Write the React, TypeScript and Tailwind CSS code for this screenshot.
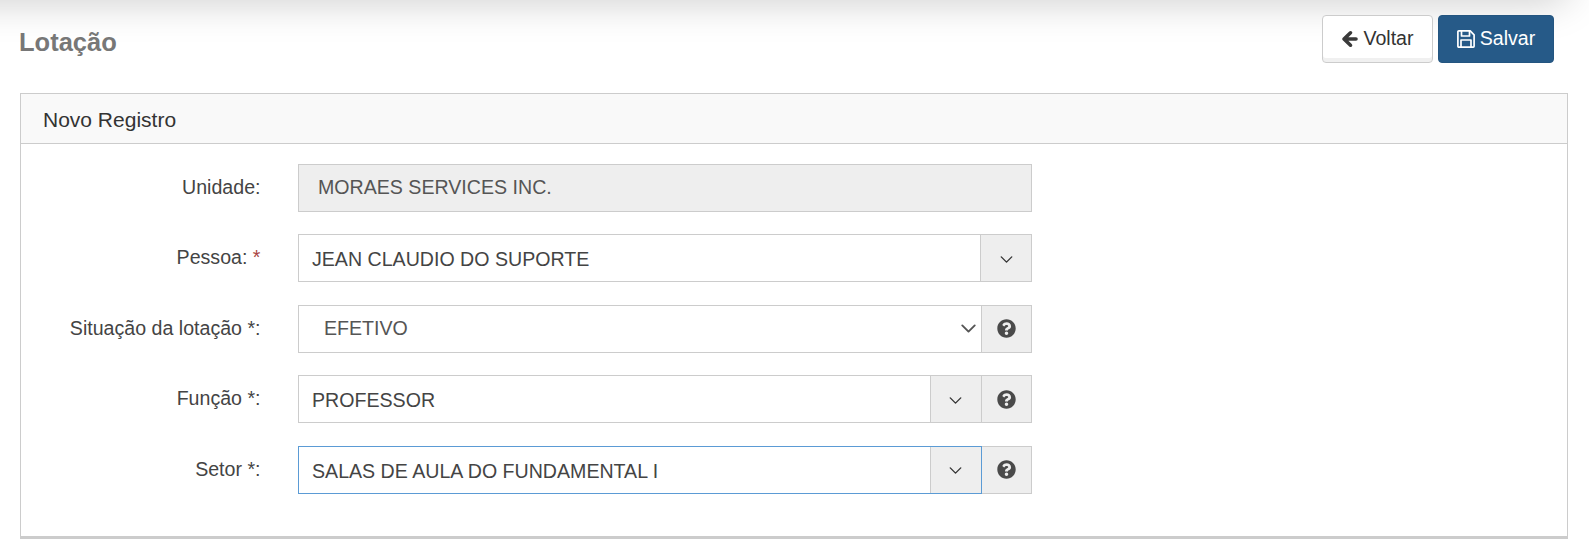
import { FaQuestionCircle } from "react-icons/fa";
import { ChevronDown } from "lucide-react";

const Help = () => (
  <div className="w-[50.5px] shrink-0 h-full bg-[#eeeeee] border border-[#cccccc] border-l-0 flex items-center justify-center">
    <FaQuestionCircle className="text-[#4a4a4a] text-[19px]" />
  </div>
);

const Caret = () => (
  <div className="w-[51px] shrink-0 h-full bg-[#eeeeee] border-l border-[#cccccc] pt-[2px] flex items-center justify-center">
    <ChevronDown size={21} strokeWidth={1.6} className="text-[#333333]" />
  </div>
);

const Row = ({ label, children }: { label: React.ReactNode; children: React.ReactNode }) => (
  <div className="flex h-[48px] items-start">
    <div className="w-[239.5px] text-right leading-[46px] text-[#444444] shrink-0">{label}</div>
    <div className="w-[734px] ml-[37.5px] h-full flex">{children}</div>
  </div>
);

export default function App() {
  return (
    <div className="relative bg-white h-[556px] overflow-hidden font-['Liberation_Sans',Arial,sans-serif] text-[19.6px] text-[#333333]">
      <div className="absolute left-[-60px] top-[-40px] w-[1630px] h-[40px] rounded-[30px] shadow-[0_0_42px_rgba(0,0,0,0.22)]" />
      <div className="relative flex justify-between pl-[19px] pr-[35px] pt-[15px] h-[93px]">
        <h1 className="text-[25.5px] font-bold text-[#777777] leading-[54px]">Lotação</h1>
        <div className="flex gap-[5px] h-[48px]">
          <button className="w-[111px] h-full rounded-[4px] border border-[#cccccc] bg-white shadow-[inset_0_-4px_0_#f0f0f0] flex items-center justify-center gap-[5px] text-[#333333]">
            <svg width="17" height="18" viewBox="0 0 17 18" fill="none" stroke="#3a3a3a" strokeWidth="3.6" strokeLinecap="round" strokeLinejoin="round">
              <path d="M15 9H4M9.5 2.8L3 9l6.5 6.2" />
            </svg>
            Voltar
          </button>
          <button className="w-[116px] h-full rounded-[4px] border border-[#245580] bg-[#265a88] flex items-center justify-center gap-[5px] text-white">
            <svg width="18" height="18" viewBox="0 0 18 18" fill="none" stroke="white" strokeWidth="1.7" strokeLinejoin="round">
              <path d="M1.8.9h11.4l3.9 3.9v11.4a.9.9 0 0 1-.9.9H1.8a.9.9 0 0 1-.9-.9V1.8a.9.9 0 0 1 .9-.9z" />
              <path d="M4.5 1v5h8V1" />
              <path d="M4 17v-7h10v7" />
            </svg>
            Salvar
          </button>
        </div>
      </div>
      <div className="relative ml-[20px] w-[1548px] h-[446px] border border-[#cccccc] border-b-[3px] bg-white">
        <div className="h-[50px] bg-[#f9f9f9] border-b border-[#cccccc] pl-[22px] pt-[3px] flex items-center text-[21px]">Novo Registro</div>
        <div className="pt-[19.9px] flex flex-col gap-[22.5px]">
          <Row label="Unidade:">
            <div className="w-full h-full bg-[#eeeeee] border border-[#cccccc] pl-[19px] pb-[1px] flex items-center text-[#555555]">MORAES SERVICES INC.</div>
          </Row>
          <Row label={<>Pessoa: <span className="text-[#a94442]">*</span></>}>
            <div className="w-full h-full border border-[#cccccc] flex">
              <div className="flex-1 pl-[13px] pt-[3px] flex items-center text-[#444444]">JEAN CLAUDIO DO SUPORTE</div>
              <Caret />
            </div>
          </Row>
          <Row label="Situação da lotação *:">
            <div className="flex-1 border border-[#cccccc] flex items-center pl-[25px] justify-between text-[#555555]">
              EFETIVO
              <ChevronDown size={25} strokeWidth={1.8} className="text-[#555555]" />
            </div>
            <Help />
          </Row>
          <Row label="Função *:">
            <div className="flex-1 border border-[#cccccc] flex">
              <div className="flex-1 pl-[13px] pt-[3px] flex items-center text-[#444444]">PROFESSOR</div>
              <Caret />
            </div>
            <Help />
          </Row>
          <Row label="Setor *:">
            <div className="flex-1 border border-[#5b9bd5] flex">
              <div className="flex-1 pl-[13px] pt-[3px] flex items-center text-[#444444]">SALAS DE AULA DO FUNDAMENTAL I</div>
              <Caret />
            </div>
            <Help />
          </Row>
        </div>
      </div>
    </div>
  );
}
